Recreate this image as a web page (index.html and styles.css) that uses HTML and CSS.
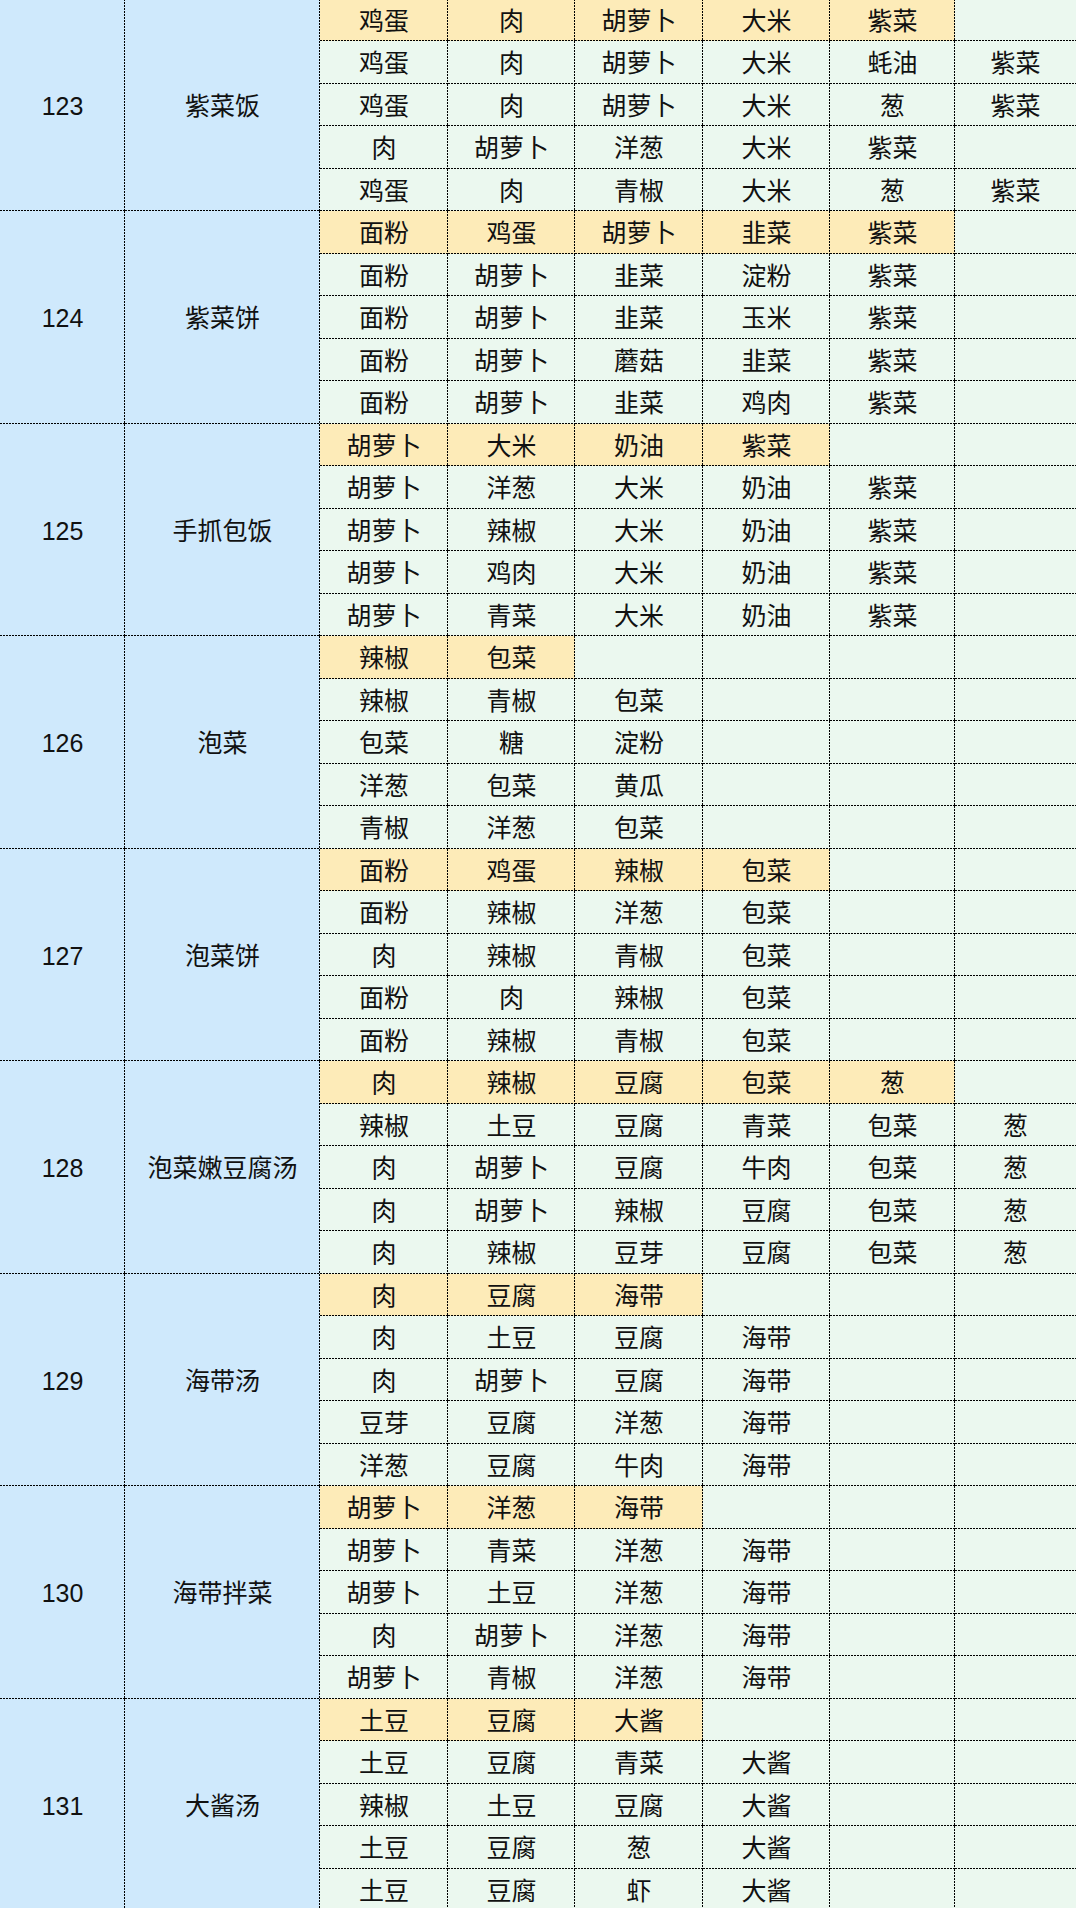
FILE: index.html
```html
<!DOCTYPE html>
<html lang="zh-CN">
<head>
<meta charset="utf-8">
<title>菜谱食材表</title>
<link rel="stylesheet" href="styles.css">
</head>
<body>
<table class="grid">
<colgroup>
<col class="c-id"><col class="c-name"><col class="c-a"><col class="c-b"><col class="c-a"><col class="c-b"><col class="c-e"><col class="c-f">
</colgroup>
<tbody>
<tr><td class="id" rowspan="5">123</td><td class="name" rowspan="5">紫菜饭</td><td class="hl">鸡蛋</td><td class="hl">肉</td><td class="hl">胡萝卜</td><td class="hl">大米</td><td class="hl">紫菜</td><td></td></tr>
<tr><td>鸡蛋</td><td>肉</td><td>胡萝卜</td><td>大米</td><td>蚝油</td><td>紫菜</td></tr>
<tr><td>鸡蛋</td><td>肉</td><td>胡萝卜</td><td>大米</td><td>葱</td><td>紫菜</td></tr>
<tr><td>肉</td><td>胡萝卜</td><td>洋葱</td><td>大米</td><td>紫菜</td><td></td></tr>
<tr><td>鸡蛋</td><td>肉</td><td>青椒</td><td>大米</td><td>葱</td><td>紫菜</td></tr>

<tr><td class="id" rowspan="5">124</td><td class="name" rowspan="5">紫菜饼</td><td class="hl">面粉</td><td class="hl">鸡蛋</td><td class="hl">胡萝卜</td><td class="hl">韭菜</td><td class="hl">紫菜</td><td></td></tr>
<tr><td>面粉</td><td>胡萝卜</td><td>韭菜</td><td>淀粉</td><td>紫菜</td><td></td></tr>
<tr><td>面粉</td><td>胡萝卜</td><td>韭菜</td><td>玉米</td><td>紫菜</td><td></td></tr>
<tr><td>面粉</td><td>胡萝卜</td><td>蘑菇</td><td>韭菜</td><td>紫菜</td><td></td></tr>
<tr><td>面粉</td><td>胡萝卜</td><td>韭菜</td><td>鸡肉</td><td>紫菜</td><td></td></tr>

<tr><td class="id" rowspan="5">125</td><td class="name" rowspan="5">手抓包饭</td><td class="hl">胡萝卜</td><td class="hl">大米</td><td class="hl">奶油</td><td class="hl">紫菜</td><td></td><td></td></tr>
<tr><td>胡萝卜</td><td>洋葱</td><td>大米</td><td>奶油</td><td>紫菜</td><td></td></tr>
<tr><td>胡萝卜</td><td>辣椒</td><td>大米</td><td>奶油</td><td>紫菜</td><td></td></tr>
<tr><td>胡萝卜</td><td>鸡肉</td><td>大米</td><td>奶油</td><td>紫菜</td><td></td></tr>
<tr><td>胡萝卜</td><td>青菜</td><td>大米</td><td>奶油</td><td>紫菜</td><td></td></tr>

<tr><td class="id" rowspan="5">126</td><td class="name" rowspan="5">泡菜</td><td class="hl">辣椒</td><td class="hl">包菜</td><td></td><td></td><td></td><td></td></tr>
<tr><td>辣椒</td><td>青椒</td><td>包菜</td><td></td><td></td><td></td></tr>
<tr><td>包菜</td><td>糖</td><td>淀粉</td><td></td><td></td><td></td></tr>
<tr><td>洋葱</td><td>包菜</td><td>黄瓜</td><td></td><td></td><td></td></tr>
<tr><td>青椒</td><td>洋葱</td><td>包菜</td><td></td><td></td><td></td></tr>

<tr><td class="id" rowspan="5">127</td><td class="name" rowspan="5">泡菜饼</td><td class="hl">面粉</td><td class="hl">鸡蛋</td><td class="hl">辣椒</td><td class="hl">包菜</td><td></td><td></td></tr>
<tr><td>面粉</td><td>辣椒</td><td>洋葱</td><td>包菜</td><td></td><td></td></tr>
<tr><td>肉</td><td>辣椒</td><td>青椒</td><td>包菜</td><td></td><td></td></tr>
<tr><td>面粉</td><td>肉</td><td>辣椒</td><td>包菜</td><td></td><td></td></tr>
<tr><td>面粉</td><td>辣椒</td><td>青椒</td><td>包菜</td><td></td><td></td></tr>

<tr><td class="id" rowspan="5">128</td><td class="name" rowspan="5">泡菜嫩豆腐汤</td><td class="hl">肉</td><td class="hl">辣椒</td><td class="hl">豆腐</td><td class="hl">包菜</td><td class="hl">葱</td><td></td></tr>
<tr><td>辣椒</td><td>土豆</td><td>豆腐</td><td>青菜</td><td>包菜</td><td>葱</td></tr>
<tr><td>肉</td><td>胡萝卜</td><td>豆腐</td><td>牛肉</td><td>包菜</td><td>葱</td></tr>
<tr><td>肉</td><td>胡萝卜</td><td>辣椒</td><td>豆腐</td><td>包菜</td><td>葱</td></tr>
<tr><td>肉</td><td>辣椒</td><td>豆芽</td><td>豆腐</td><td>包菜</td><td>葱</td></tr>

<tr><td class="id" rowspan="5">129</td><td class="name" rowspan="5">海带汤</td><td class="hl">肉</td><td class="hl">豆腐</td><td class="hl">海带</td><td></td><td></td><td></td></tr>
<tr><td>肉</td><td>土豆</td><td>豆腐</td><td>海带</td><td></td><td></td></tr>
<tr><td>肉</td><td>胡萝卜</td><td>豆腐</td><td>海带</td><td></td><td></td></tr>
<tr><td>豆芽</td><td>豆腐</td><td>洋葱</td><td>海带</td><td></td><td></td></tr>
<tr><td>洋葱</td><td>豆腐</td><td>牛肉</td><td>海带</td><td></td><td></td></tr>

<tr><td class="id" rowspan="5">130</td><td class="name" rowspan="5">海带拌菜</td><td class="hl">胡萝卜</td><td class="hl">洋葱</td><td class="hl">海带</td><td></td><td></td><td></td></tr>
<tr><td>胡萝卜</td><td>青菜</td><td>洋葱</td><td>海带</td><td></td><td></td></tr>
<tr><td>胡萝卜</td><td>土豆</td><td>洋葱</td><td>海带</td><td></td><td></td></tr>
<tr><td>肉</td><td>胡萝卜</td><td>洋葱</td><td>海带</td><td></td><td></td></tr>
<tr><td>胡萝卜</td><td>青椒</td><td>洋葱</td><td>海带</td><td></td><td></td></tr>

<tr><td class="id" rowspan="5">131</td><td class="name" rowspan="5">大酱汤</td><td class="hl">土豆</td><td class="hl">豆腐</td><td class="hl">大酱</td><td></td><td></td><td></td></tr>
<tr><td>土豆</td><td>豆腐</td><td>青菜</td><td>大酱</td><td></td><td></td></tr>
<tr><td>辣椒</td><td>土豆</td><td>豆腐</td><td>大酱</td><td></td><td></td></tr>
<tr><td>土豆</td><td>豆腐</td><td>葱</td><td>大酱</td><td></td><td></td></tr>
<tr><td>土豆</td><td>豆腐</td><td>虾</td><td>大酱</td><td></td><td></td></tr>
</tbody>
</table>
</body>
</html>
```

FILE: styles.css
```css
html, body {
  margin: 0;
  padding: 0;
  background: #ebf8ef;
  overflow: hidden;
}

.grid {
  width: 1076px;
  table-layout: fixed;
  border-collapse: separate;
  border-spacing: 0;
  margin-top: -1.5px;
  font-family: "Liberation Sans", "Noto Sans CJK SC", sans-serif;
  font-size: 25px;
  color: #111;
}

.c-id { width: 125px; }
.c-name { width: 195px; }
.c-a { width: 128px; }
.c-b { width: 127px; }
.c-e { width: 125px; }
.c-f { width: 121px; }

.grid tr {
  height: 42.5px;
}

.grid td {
  --cell: #ebf8ef;
  --dot-h: repeating-linear-gradient(90deg, #000 0 2px, transparent 2px 3px);
  --dot-v: repeating-linear-gradient(180deg, #000 0 2px, transparent 2px 3px);
  padding: 3px 0 0;
  border: none;
  text-align: center;
  vertical-align: middle;
  line-height: 1;
  white-space: nowrap;
  background:
    var(--dot-h) left bottom / 100% 1px no-repeat,
    var(--dot-v) right top / 1px 100% no-repeat,
    var(--cell);
}

.grid td:last-child {
  background:
    var(--dot-h) left bottom / 100% 1px no-repeat,
    var(--cell);
}

.grid td.hl {
  --cell: #fdebb8;
}

.grid td.id,
.grid td.name {
  --cell: #cfe9fc;
}
```
